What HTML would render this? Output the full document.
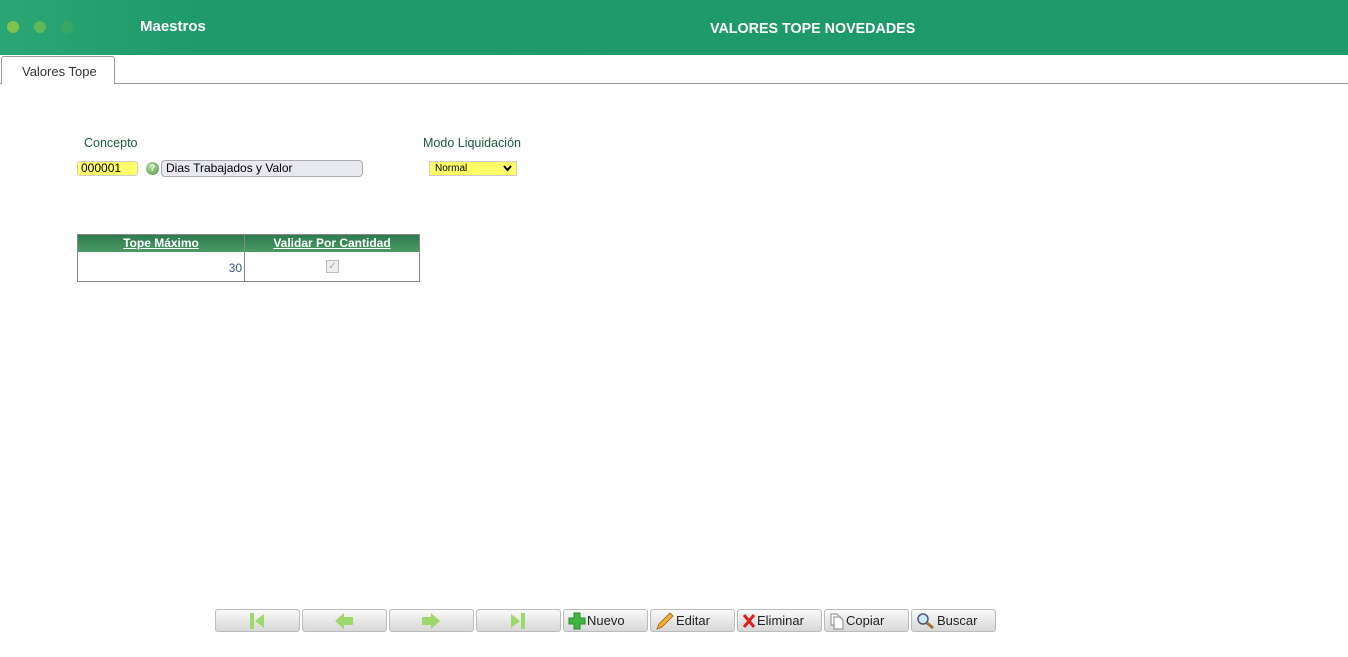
<!DOCTYPE html>
<html><head><meta charset="utf-8"><style>
*{box-sizing:border-box;margin:0;padding:0}
body{width:1348px;height:657px;background:#fff;font-family:"Liberation Sans",sans-serif;position:relative;overflow:hidden}
.hdr{position:absolute;left:0;top:0;width:1348px;height:55px;background:linear-gradient(90deg,#2aa774 0,#1f9a69 200px,#1e996a 100%)}
.dot{position:absolute;top:21px;width:12px;height:12px;border-radius:50%}
.ab{position:absolute}
.btn{position:absolute;top:609px;width:85px;height:23px;border:1px solid #bbb;border-radius:3px;background:linear-gradient(#fafafa,#e4e4e4 60%,#d8d8d8);font-size:13px;color:#222;display:flex;align-items:center;padding-left:4px}
.btn svg{margin-right:1px}
</style></head><body>
<div class="hdr">
<div class="dot" style="left:7px;background:#7fc24f"></div>
<div class="dot" style="left:34px;background:#5fb85a"></div>
<div class="dot" style="left:61px;background:#3aa865"></div>
<div class="ab" style="left:140px;top:18px;color:#fff;font-weight:bold;font-size:15px">Maestros</div>
<div class="ab" style="left:710px;top:21px;color:#fff;font-weight:bold;font-size:14.3px">VALORES TOPE NOVEDADES</div>
</div>
<div class="ab" style="left:0;top:83px;width:1348px;height:1px;background:#999"></div>
<div class="ab" style="left:1px;top:56px;width:114px;height:28px;border:1px solid #999;border-bottom:none;border-radius:3px 3px 0 0;background:#fff;font-size:13px;color:#333;padding:7px 0 0 20px">Valores Tope</div>
<div class="ab" style="left:84px;top:136px;font-size:12.5px;color:#1a5a3a">Concepto</div>
<div class="ab" style="left:423px;top:136px;font-size:12.5px;color:#1a5a3a">Modo Liquidación</div>
<div class="ab" style="left:77px;top:161px;width:61px;height:15px;background:#ffff66;border:1px solid #ccc;border-radius:3px;font-size:12px;padding-left:3px;line-height:13px">000001</div>
<div class="ab" style="left:146px;top:162px;width:13px;height:13px;border-radius:50%;background:radial-gradient(circle at 40% 35%,#b8e0a0,#4a9a40);color:#fff;font-size:9px;font-weight:bold;text-align:center;line-height:13px">?</div>
<div class="ab" style="left:161px;top:160px;width:202px;height:17px;background:#e8e8f0;border:1px solid #aaa;border-radius:4px;font-size:12px;padding-left:4px;line-height:15px">Dias Trabajados y Valor</div>
<div class="ab" style="left:429px;top:161px;width:88px;height:15px;background:#ffff66;border:1px solid #ccc;font-size:10px;padding-left:5px;line-height:13px">Normal<svg style="position:absolute;right:4px;top:3px" width="9" height="7"><path d="M1 1L4.5 5L8 1" stroke="#000" stroke-width="2" fill="none"/></svg></div>
<div class="ab" style="left:77px;top:234px;width:343px;height:48px;border:1px solid #888"></div>
<div class="ab" style="left:78px;top:235px;width:341px;height:17px;background:linear-gradient(#2e7a4e,#4a9a64);"></div>
<div class="ab" style="left:244px;top:235px;width:1px;height:46px;background:#888"></div>
<div class="ab" style="left:78px;top:236px;width:166px;text-align:center;color:#fff;font-weight:bold;font-size:12px;text-decoration:underline">Tope Máximo</div>
<div class="ab" style="left:245px;top:236px;width:174px;text-align:center;color:#fff;font-weight:bold;font-size:12px;text-decoration:underline">Validar Por Cantidad</div>
<div class="ab" style="left:200px;top:261px;width:42px;text-align:right;font-size:12px;color:#3a5a7a">30</div>
<div class="ab" style="left:326px;top:260px;width:13px;height:13px;border:1px solid #bbb;background:#eee;color:#aaa;font-size:10px;text-align:center;line-height:12px">✓</div>

<div class="btn" style="left:215px;justify-content:center;padding:0"><svg width="20" height="18"><rect x="3" y="1" width="4" height="16" fill="#9cd86a"/><path d="M17 2L8 9L17 16Z" fill="#9cd86a"/></svg></div>
<div class="btn" style="left:302px;justify-content:center;padding:0"><svg width="20" height="18"><path d="M1 9L10 1V5H19V13H10V17Z" fill="#9cd86a"/></svg></div>
<div class="btn" style="left:389px;justify-content:center;padding:0"><svg width="20" height="18"><path d="M19 9L10 1V5H1V13H10V17Z" fill="#9cd86a"/></svg></div>
<div class="btn" style="left:476px;justify-content:center;padding:0"><svg width="20" height="18"><rect x="13" y="1" width="4" height="16" fill="#9cd86a"/><path d="M3 2L12 9L3 16Z" fill="#9cd86a"/></svg></div>
<div class="btn" style="left:563px"><svg width="18" height="18"><path d="M6 1H12V6H17V12H12V17H6V12H1V6H6Z" fill="#3cb83c" stroke="#2a8a2a"/></svg>Nuevo</div>
<div class="btn" style="left:650px"><svg width="20" height="18"><path d="M2 17L4 12L15 1L18 4L7 15Z" fill="#f0b030" stroke="#a06010" stroke-width=".8"/></svg>Editar</div>
<div class="btn" style="left:737px"><svg width="14" height="18"><path d="M2 3L12 15M12 3L2 15" stroke="#e02020" stroke-width="3"/></svg>Eliminar</div>
<div class="btn" style="left:824px"><svg width="16" height="18"><path d="M2 2H8L10 4V13H2Z" fill="#fff" stroke="#888"/><path d="M5 5H11L14 8V17H5Z" fill="#fff" stroke="#888"/></svg>Copiar</div>
<div class="btn" style="left:911px"><svg width="20" height="18"><circle cx="7" cy="7" r="5" fill="#cce8ff" stroke="#557" stroke-width="1.5"/><path d="M11 11L17 16" stroke="#a07030" stroke-width="3"/></svg>Buscar</div>
</body></html>
